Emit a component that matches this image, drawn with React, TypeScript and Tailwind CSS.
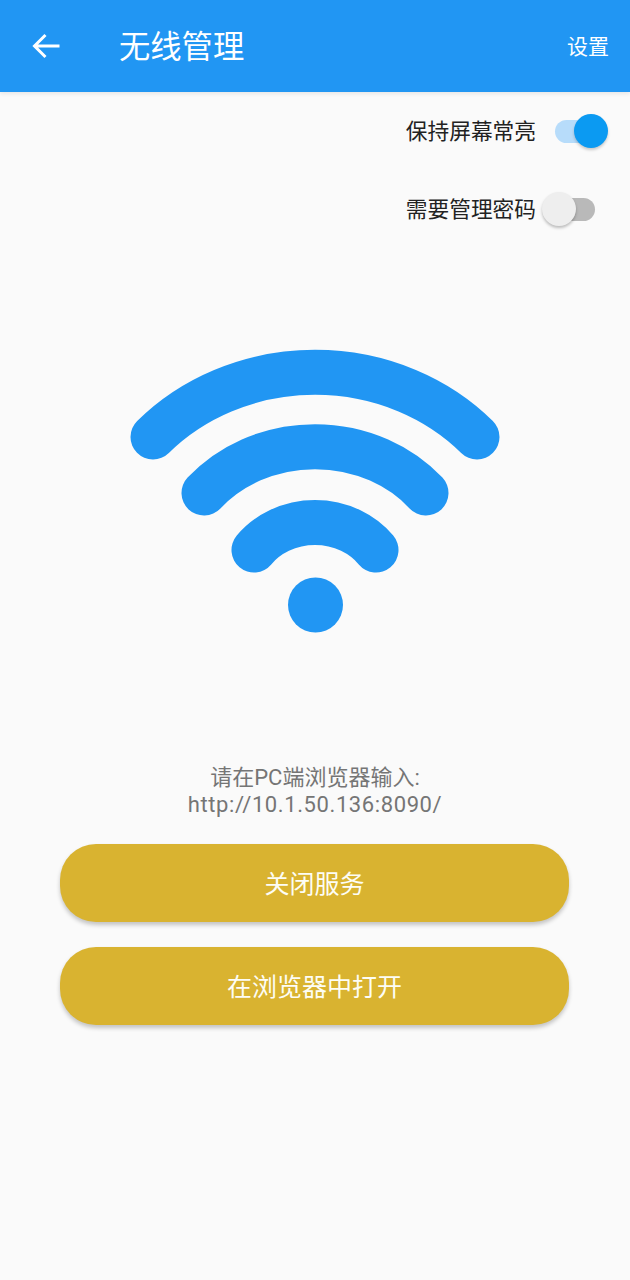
const fontFamily = 'font-["Roboto","Noto_Sans_CJK_SC",sans-serif]';

function Toggle({ on }: { on: boolean }) {
  if (on) {
    return (
      <div className="relative ml-[19px] mr-[35px] h-[23px] w-[40px] rounded-full bg-[#b7dcfa]">
        <div className="absolute left-[19px] top-[-5.5px] h-[34px] w-[34px] rounded-full bg-[#0b9af2] shadow-[0_2px_3px_rgba(0,0,0,0.2)]" />
      </div>
    );
  }
  return (
    <div className="relative ml-[19px] mr-[35px] h-[23px] w-[40px] rounded-full bg-[#b9b9b9]">
      <div className="absolute left-[-13px] top-[-5.5px] h-[34px] w-[34px] rounded-full bg-[#eeeeee] shadow-[0_2px_3px_rgba(0,0,0,0.25)]" />
    </div>
  );
}

function ActionButton({ label }: { label: string }) {
  return (
    <button className="flex h-[78px] w-[509px] items-center justify-center rounded-[36px] bg-[#d9b330] pt-[3px] text-[25px] text-[#fdfdf5] shadow-[0_3px_4px_rgba(0,0,0,0.22)]">
      {label}
    </button>
  );
}

export default function App() {
  return (
    <div className={`${fontFamily} flex h-[1280px] w-[630px] flex-col bg-[#fafafa]`}>
      {/* Header */}
      <header className="relative flex h-[92px] shrink-0 items-center bg-[#2196f3] text-white shadow-[0_2px_4px_rgba(0,0,0,0.08)]">
        <svg className="ml-[32px]" width="29" height="26" viewBox="0 0 29 26" fill="none">
          <path d="M27.5 13H3M13.5 2L2.5 13L13.5 24" stroke="#fff" strokeWidth="3" />
        </svg>
        <h1 className="ml-[58px] flex-1 pt-[3px] text-[31.3px] font-normal leading-none">无线管理</h1>
        <span className="mr-[21px] pt-[3px] text-[21px] leading-none">设置</span>
      </header>

      {/* Switches */}
      <div className="flex h-[78px] items-center justify-end text-[21.7px] text-[#222222]">
        <span className="pt-[2px]">保持屏幕常亮</span>
        <Toggle on />
      </div>
      <div className="flex h-[78px] items-center justify-end text-[21.7px] text-[#222222]">
        <span className="pt-[2px]">需要管理密码</span>
        <Toggle on={false} />
      </div>

      {/* Wifi logo */}
      <div className="mt-[92px] flex justify-center">
        <svg width="390" height="300" viewBox="120 340 390 300" fill="none" stroke="#2196f3" strokeWidth="45" strokeLinecap="round">
          <path d="M153 437A220 200 0 0 1 477 437" />
          <path d="M204 493A145 130 0 0 1 426 493" />
          <path d="M254 550A76.8 70 0 0 1 376 550" />
          <circle cx="315.5" cy="605" r="27.5" fill="#2196f3" stroke="none" />
        </svg>
      </div>

      {/* Address */}
      <div className="mt-[124px] text-center text-[22px] text-[#757575]">
        <p className="leading-[27px]">请在PC端浏览器输入:</p>
        <p className="leading-[28px] tracking-[0.6px]">http://10.1.50.136:8090/</p>
      </div>

      {/* Actions */}
      <div className="mt-[25px] flex flex-col gap-[25px] pl-[60px]">
        <ActionButton label="关闭服务" />
        <ActionButton label="在浏览器中打开" />
      </div>
    </div>
  );
}
